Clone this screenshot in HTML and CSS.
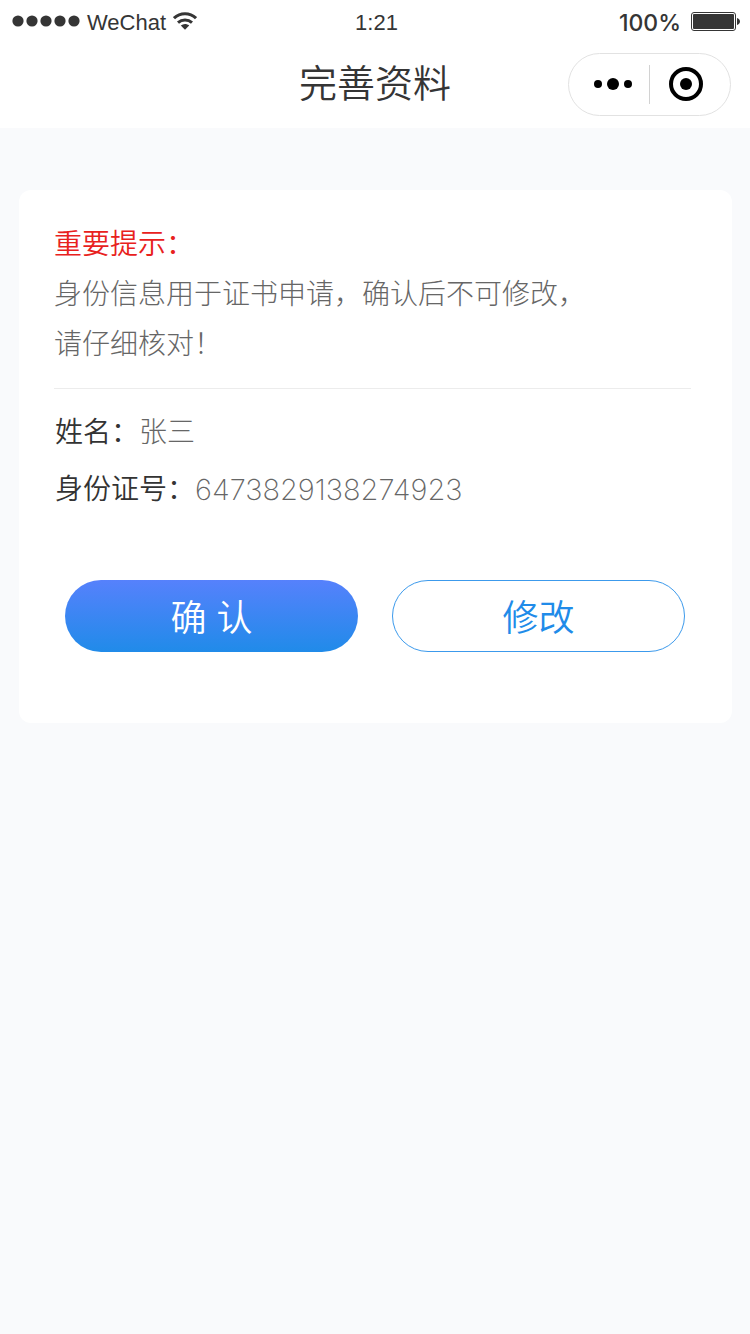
FILE: index.html
```html
<!DOCTYPE html>
<html lang="zh-CN">
<head>
<meta charset="utf-8">
<meta name="viewport" content="width=device-width, initial-scale=1">
<title>完善资料</title>
<link rel="stylesheet" href="styles.css">
</head>
<body>
<header class="top">
  <div class="status">
    <div class="status-left">
      <svg class="signal" width="68" height="12" viewBox="0 0 68 12" aria-hidden="true">
        <circle cx="6" cy="6" r="5.6"/><circle cx="20" cy="6" r="5.6"/><circle cx="34" cy="6" r="5.6"/><circle cx="48" cy="6" r="5.6"/><circle cx="62" cy="6" r="5.6"/>
      </svg>
      <span class="carrier">WeChat</span>
      <svg class="wifi" width="24" height="18" viewBox="0 0 24 18" aria-hidden="true">
        <path class="arc" d="M1 6.200C7.200.2 16.800.2 23 6.200M5 10.600c4-3.600 10-3.600 14 0"/>
        <path d="M7.800 13.600c2.600-2 5.800-2 8.400 0L12 17.800z"/>
      </svg>
    </div>
    <span class="clock">1:21</span>
    <div class="status-right">
      <span class="percent">100%</span>
      <svg class="battery" width="50" height="19" viewBox="0 0 50 19" aria-hidden="true">
        <rect class="shell" x=".5" y=".5" width="44" height="18" rx="2.500"/>
        <rect x="2" y="2" width="41" height="15" rx="1"/>
        <path d="M46 6c1.600.3 3 1.800 3 3.500S47.600 12.700 46 13z"/>
      </svg>
    </div>
  </div>
  <div class="nav">
    <h1 class="title">完善资料</h1>
    <div class="capsule">
      <button class="capsule-button more" type="button" aria-label="更多">
        <svg width="38" height="12" viewBox="0 0 38 12" aria-hidden="true"><circle cx="4" cy="6" r="4"/><circle cx="19" cy="6" r="6"/><circle cx="34" cy="6" r="4"/></svg>
      </button>
      <button class="capsule-button close" type="button" aria-label="关闭">
        <svg width="34" height="34" viewBox="0 0 34 34" aria-hidden="true"><circle class="ring" cx="17" cy="17" r="15"/><circle cx="17" cy="17" r="6"/></svg>
      </button>
    </div>
  </div>
</header>
<main class="page">
  <section class="card">
    <div class="notice">
      <h2 class="notice-title">重要提示：</h2>
      <p class="notice-text">身份信息用于证书申请，确认后不可修改，<br>请仔细核对！</p>
    </div>
    <dl class="info">
      <div class="row"><dt>姓名：</dt><dd>张三</dd></div>
      <div class="row"><dt>身份证号：</dt><dd class="number">6473829138274923</dd></div>
    </dl>
    <div class="actions">
      <button class="button primary" type="button">确 认</button>
      <button class="button outline" type="button">修改</button>
    </div>
  </section>
</main>
</body>
</html>
```

FILE: styles.css
```css
* {
  box-sizing: border-box;
}

body {
  margin: 0;
  min-height: 100vh;
  background: #f9fafc;
  color: #353535;
  font-family: Inter, "Noto Sans CJK SC", sans-serif;
}

button {
  margin: 0;
  border: 0;
  padding: 0;
  background: none;
  color: inherit;
  cursor: pointer;
}

.top {
  height: 128px;
  background: #fff;
}

.status {
  display: grid;
  grid-template-columns: 1fr auto 1fr;
  align-items: center;
  height: 42px;
  padding: 0 9px 0 12px;
  font-size: 23px;
  line-height: 28px;
}

.status svg {
  fill: #353535;
}

.status-left,
.status-right {
  display: flex;
  align-items: center;
}

.status-left {
  gap: 7px;
}

.status-right {
  justify-content: flex-end;
  gap: 10px;
}

.carrier,
.clock {
  padding-top: 4px;
  font-family: "Liberation Sans", sans-serif;
  font-size: 22px;
}

.percent {
  padding-top: 4px;
  font-weight: 500;
}

.wifi .arc {
  fill: none;
  stroke: #353535;
  stroke-width: 3;
}

.battery .shell {
  fill: none;
  stroke: #353535;
}

.nav {
  display: grid;
  grid-template-columns: 1fr auto 1fr;
  align-items: center;
  height: 84px;
  padding: 0 19px;
}

.title {
  grid-column: 2;
  margin: 0;
  padding-bottom: 2px;
  font-size: 38px;
  font-weight: 350;
  line-height: 56px;
}

.capsule {
  display: grid;
  grid-template-columns: 1fr 1fr;
  justify-self: end;
  width: 163px;
  height: 63px;
  border: 1px solid #e2e2e2;
  border-radius: 32px;
  background: #fff;
}

.capsule-button {
  display: flex;
  align-items: center;
  justify-content: center;
}

.more {
  padding-left: 8px;
}

.close {
  position: relative;
  padding-right: 8px;
}

.close::before {
  content: "";
  position: absolute;
  top: 11px;
  bottom: 11px;
  left: -1px;
  width: 1px;
  background: #d2d2d2;
}

.capsule .ring {
  fill: none;
  stroke: #000;
  stroke-width: 4;
}

.page {
  padding: 62px 18px 62px 19px;
}

.card {
  padding: 29px 41px 71px 35px;
  border-radius: 12px;
  background: #fff;
  font-size: 28px;
}

.notice {
  padding-bottom: 19px;
  border-bottom: 1px solid #ececec;
  line-height: 50px;
}

.notice-title {
  margin: 0;
  color: #e8211d;
  font-size: 28px;
  font-weight: 350;
}

.notice-text {
  margin: 0;
  color: #666;
  font-weight: 300;
}

.info {
  margin: 0;
  padding: 15px 0 62px 1px;
  line-height: 57px;
}

.row {
  display: flex;
}

.row dt {
  color: #333;
  font-weight: 350;
}

.row dd {
  margin: 0;
  color: #666;
  font-weight: 300;
}

.row .number {
  font-size: 29px;
  font-weight: 200;
}

.actions {
  display: grid;
  grid-template-columns: 1fr 1fr;
  gap: 34px;
  padding: 0 6px 0 11px;
}

.button {
  height: 72px;
  padding-top: 6px;
  border-radius: 36px;
  font-family: "Liberation Sans", "Noto Sans CJK SC", sans-serif;
  font-size: 36px;
  font-weight: 350;
  line-height: 54px;
}

.primary {
  background: linear-gradient(#5681fc, #208be9);
  color: #fff;
}

.outline {
  border: 1px solid #3c9aec;
  color: #208be9;
}
```
